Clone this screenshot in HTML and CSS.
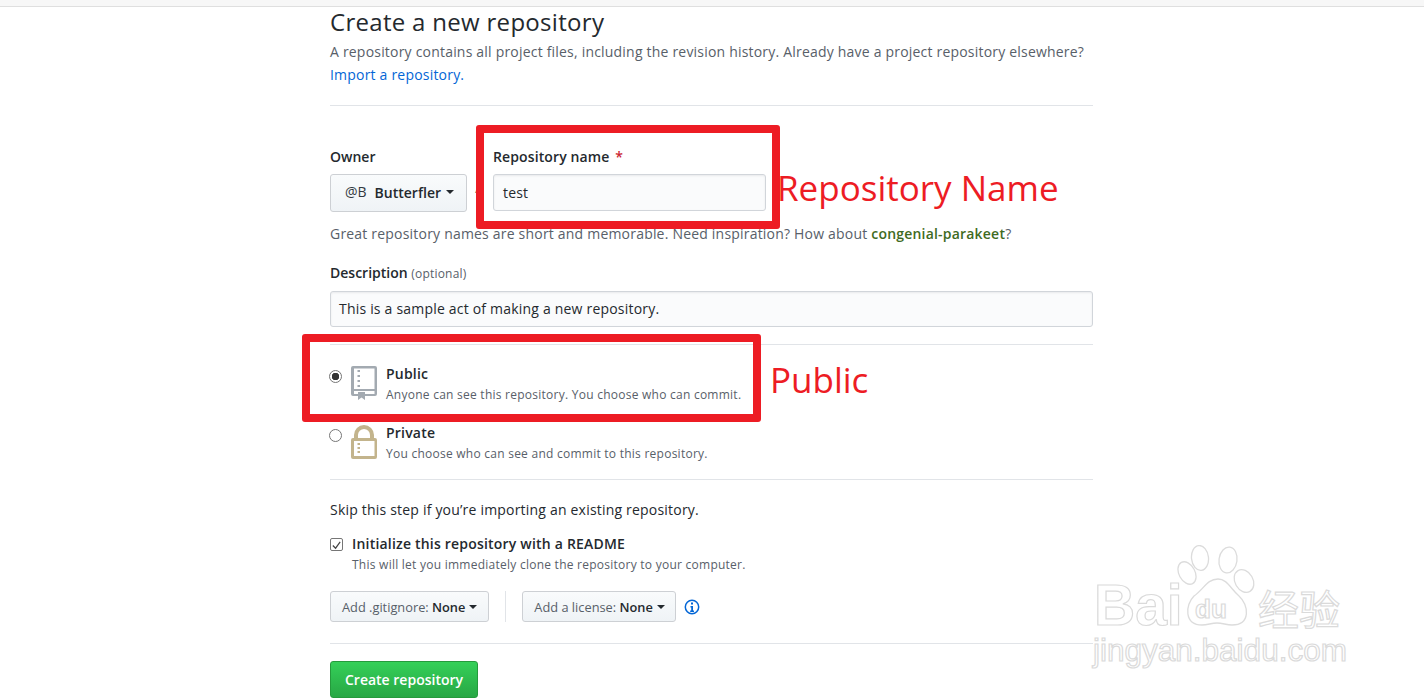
FILE: index.html
```html
<!DOCTYPE html>
<html lang="en">
<head>
<meta charset="utf-8">
<title>Create a new repository</title>
<link rel="stylesheet" href="styles.css">
</head>
<body>
<div class="topbar"></div>
<main class="page">
  <h1 class="title">Create a new repository</h1>
  <p class="lead">A repository contains all project files, including the revision history. Already have a project repository elsewhere?</p>
  <p class="lead-link"><a href="#">Import a repository.</a></p>
  <hr class="rule rule-head">
  <div class="owner-row">
    <div class="owner">
      <div class="label">Owner</div>
      <div class="btn owner-btn"><span class="avatar">@B</span><b>Butterfler</b><i class="caret"></i></div>
    </div>
    <span class="slash">/</span>
    <div class="repo">
      <div class="label label-repo">Repository name <span class="req">*</span></div>
      <div class="field field-repo">test</div>
    </div>
  </div>
  <p class="note">Great repository names are short and memorable. Need inspiration? How about <b class="suggest">congenial-parakeet</b>?</p>
  <div class="label label-desc">Description <span class="optional">(optional)</span></div>
  <div class="field field-desc">This is a sample act of making a new repository.</div>
  <hr class="rule rule-desc">
  <div class="choice choice-public">
    <span class="radio radio-on"></span>
    <svg class="choice-icon" viewBox="0 0 26 34" width="26" height="34">
      <path fill="#a3aab1" fill-rule="evenodd" d="M2 0h22a2 2 0 0 1 2 2v26a2 2 0 0 1-2 2H2a2 2 0 0 1-2-2V2a2 2 0 0 1 2-2zM3 2.500V23h20.500V2.500zM3 25v3h20.500v-3z"/>
      <path fill="#a3aab1" d="M6.500 4h2.500v2H6.500zM6.500 9h2.500v2H6.500zM6.500 14h2.500v2H6.500zM6.500 19h2.500v2H6.500zM7 26h7v8l-3.500-2.500L7 34z"/>
    </svg>
    <div class="choice-text"><b>Public</b><small>Anyone can see this repository. You choose who can commit.</small></div>
  </div>
  <div class="choice choice-private">
    <span class="radio"></span>
    <svg class="choice-icon" viewBox="0 0 26 34" width="26" height="34">
      <path fill="#c3b48c" d="M3 14V10a10 10 0 0 1 20 0v4h-4V10a6 6 0 0 0-12 0v4z"/>
      <path fill="#c3b48c" fill-rule="evenodd" d="M2 13h22a2 2 0 0 1 2 2v17a2 2 0 0 1-2 2H2a2 2 0 0 1-2-2V15a2 2 0 0 1 2-2zm1 3v15h20.500V16z"/>
      <path fill="#c3b48c" d="M6.500 18h2.500v2H6.500zM6.500 22h2.500v2H6.500zM6.500 26h2.500v2H6.500z"/>
    </svg>
    <div class="choice-text"><b>Private</b><small>You choose who can see and commit to this repository.</small></div>
  </div>
  <hr class="rule rule-private">
  <p class="skip">Skip this step if you’re importing an existing repository.</p>
  <div class="readme">
    <span class="check"><svg viewBox="0 0 12 12" width="12" height="12"><path d="M2 6.500l3 3 5-7" fill="none" stroke="#444" stroke-width="1.300"/></svg></span>
    <div class="choice-text"><b>Initialize this repository with a README</b><small>This will let you immediately clone the repository to your computer.</small></div>
  </div>
  <div class="adds">
    <div class="btn btn-small">Add .gitignore:&nbsp;<b>None</b><i class="caret"></i></div>
    <span class="divider"></span>
    <div class="btn btn-small btn-license">Add a license:&nbsp;<b>None</b><i class="caret"></i></div>
    <svg class="info" viewBox="0 0 16 16" width="16" height="16">
      <circle cx="8" cy="8" r="6.700" fill="none" stroke="#0366d6" stroke-width="1.500"/>
      <path fill="#0366d6" d="M7 3.500h2v2H7zM6.500 7H9v4.500h1V13H6.200v-1.500h1V8.400h-.7z"/>
    </svg>
  </div>
  <hr class="rule rule-adds">
  <div class="create">Create repository</div>
</main>

<div class="mark mark-name"></div>
<div class="callout callout-name">Repository Name</div>
<div class="mark mark-public"></div>
<div class="callout callout-public">Public</div>

<div class="watermark">
  <svg class="paw" viewBox="0 0 84 84" width="84" height="84">
    <g fill="#fff" stroke="#dcdcdc" stroke-width="1.300">
      <ellipse cx="23" cy="13" rx="8.500" ry="12.500" transform="rotate(-6 23 13)"/>
      <ellipse cx="51" cy="15" rx="9" ry="13" transform="rotate(8 51 15)"/>
      <ellipse cx="10" cy="28" rx="8" ry="12" transform="rotate(-28 10 28)"/>
      <ellipse cx="67" cy="36" rx="9" ry="12" transform="rotate(-30 67 36)"/>
      <path d="M41 34c9 0 12 9 21 17 10 9 12 29-7 29-6 0-9-2-15-2s-9 2-15 2c-18 0-17-20-8-29 10-7 13-17 24-17z"/>
    </g>
  </svg>
  <span class="wm wm-bai">Bai</span>
  <span class="wm wm-du">du</span>
  <span class="wm wm-cn">经验</span>
  <span class="wm wm-url">jingyan.baidu.com</span>
</div>
</body>
</html>
```

FILE: styles.css
```css
* { box-sizing: border-box; }
html, body { margin: 0; padding: 0; height: 698px; overflow: hidden; background: #fff; }
body {
  position: relative;
  font-family: "Open Sans", "Noto Sans", sans-serif;
  font-size: 14px;
  letter-spacing: .2px;
  color: #24292e;
}
.topbar { height: 7px; background: #f7f7f7; border-bottom: 1px solid #dfdfdf; }
.page { width: 763px; margin-left: 330px; }
.title { margin: 0; height: 33px; font-size: 24px; font-weight: 400; line-height: 30px; letter-spacing: .3px; }
.lead { margin: 0; height: 23px; line-height: 23px; color: #586069; white-space: nowrap; }
.lead-link { margin: 0; height: 23px; line-height: 23px; }
a { color: #0366d6; text-decoration: none; }
.rule { border: 0; border-top: 1px solid #e1e4e8; margin: 0; }
.rule-head { margin-top: 19px; }
.owner-row { display: flex; margin-top: 41px; }
.label { font-weight: 600; height: 20px; line-height: 20px; white-space: nowrap; letter-spacing: 0; }
.label-repo { letter-spacing: .12px; }
.owner, .repo { display: flex; flex-direction: column; }
.owner-btn { margin-top: 7px; width: 137px; height: 38px; padding-bottom: 2px; }
.btn {
  display: flex;
  align-items: center;
  border: 1px solid #cdd0d4;
  border-radius: 3px;
  background: linear-gradient(#f9fbfc, #eff3f6);
  white-space: nowrap;
  letter-spacing: 0;
}
.avatar { margin: 0 8px 0 14px; color: #33393f; position: relative; top: -1px; }
.owner-btn b { font-weight: 600; }
.caret {
  display: inline-block;
  margin-left: 5px;
  border-top: 4px solid #24292e;
  border-left: 4px solid transparent;
  border-right: 4px solid transparent;
}
.slash { width: 26px; padding: 25px 0 0 8px; font-size: 20px; color: #586069; }
.req { color: #cb2431; margin-left: 2px; }
.field {
  border: 1px solid #d1d5da;
  border-radius: 3px;
  background: #fafbfc;
  box-shadow: inset 0 1px 2px rgba(27,31,35,.075);
  line-height: 34px;
}
.field-repo { margin-top: 7px; width: 273px; height: 37px; padding: 1px 0 0 9px; }
.note { margin: 10px 0 0; height: 23px; line-height: 23px; color: #586069; white-space: nowrap; }
.suggest { color: #3f6b22; font-weight: 600; }
.label-desc { margin-top: 18px; }
.optional { font-weight: 400; font-size: 12px; color: #586069; letter-spacing: .2px; }
.field-desc { margin-top: 8px; height: 36px; padding-left: 8px; }
.rule-desc { margin-top: 17px; }
.choice { display: flex; align-items: flex-start; }
.choice-public { margin-top: 19px; }
.choice-private { margin-top: 19px; }
.radio {
  flex: none;
  width: 13px;
  height: 13px;
  margin: 6px 0 0 -1px;
  border: 1px solid #767676;
  border-radius: 50%;
  background: #fff;
}
.radio-on { background: radial-gradient(circle, #333 0 3.500px, #fff 4px); }
.choice-icon { flex: none; margin: 2px 9px 0 9px; }
.choice-text { display: flex; flex-direction: column; white-space: nowrap; }
.choice-text b { font-weight: 600; height: 20px; line-height: 20px; }
.choice-text small { margin-top: 2px; height: 18px; line-height: 18px; font-size: 12px; color: #586069; letter-spacing: .25px; }
.rule-private { margin-top: 16px; }
.skip { margin: 18px 0 0; height: 23px; line-height: 23px; white-space: nowrap; }
.readme { display: flex; margin-top: 13px; }
.check {
  flex: none;
  width: 13px;
  height: 13px;
  margin: 4px 9px 0 0;
  border: 1px solid #767676;
  border-radius: 2px;
  background: #fff;
  display: flex;
  align-items: center;
  justify-content: center;
}
.adds { display: flex; align-items: center; margin-top: 17px; height: 31px; }
.btn-small { height: 31px; padding: 0 11px; font-size: 12.800px; color: #586069; }
.btn-small b { color: #24292e; font-weight: 600; }
.btn-small .caret { margin-left: 4px; }
.btn-license { width: 154px; }
.divider { width: 1px; height: 31px; background: #e1e4e8; margin: 0 16px; }
.info { margin-left: 8px; }
.rule-adds { margin-top: 21px; }
.create {
  margin-top: 17px;
  width: 148px;
  height: 37px;
  line-height: 35px;
  text-align: center;
  color: #fff;
  font-weight: 600;
  letter-spacing: 0;
  border: 1px solid #259a3c;
  border-radius: 3px;
  background: linear-gradient(#34d058, #28a745);
}
.mark { position: absolute; border: 8px solid #ed1c24; border-radius: 3px; }
.mark-name { left: 476px; top: 125px; width: 304px; height: 104px; }
.mark-public { left: 302px; top: 334px; width: 459px; height: 88px; }
.callout { position: absolute; color: #ed1c24; font-size: 35px; line-height: 44px; white-space: nowrap; letter-spacing: 0; }
.callout-name { left: 777px; top: 166px; }
.callout-public { left: 770px; top: 358px; }
.watermark { position: absolute; left: 1090px; top: 540px; width: 260px; height: 130px; letter-spacing: 0; }
.paw { position: absolute; left: 87px; top: 5px; }
.wm {
  position: absolute;
  color: #fff;
  -webkit-text-stroke: 1.200px #dadada;
  font-family: "Liberation Sans", sans-serif;
  white-space: nowrap;
}
.wm-bai { left: 4px; top: 33px; font-size: 57px; font-weight: 700; line-height: 64px; }
.wm-du { left: 105px; top: 54px; font-size: 26px; line-height: 30px; font-weight: 700; }
.wm-cn { left: 168px; top: 42px; font-size: 41px; line-height: 50px; font-family: "Noto Sans CJK SC", sans-serif; }
.wm-url { left: 3px; top: 90px; font-size: 31.500px; line-height: 40px; }
```
